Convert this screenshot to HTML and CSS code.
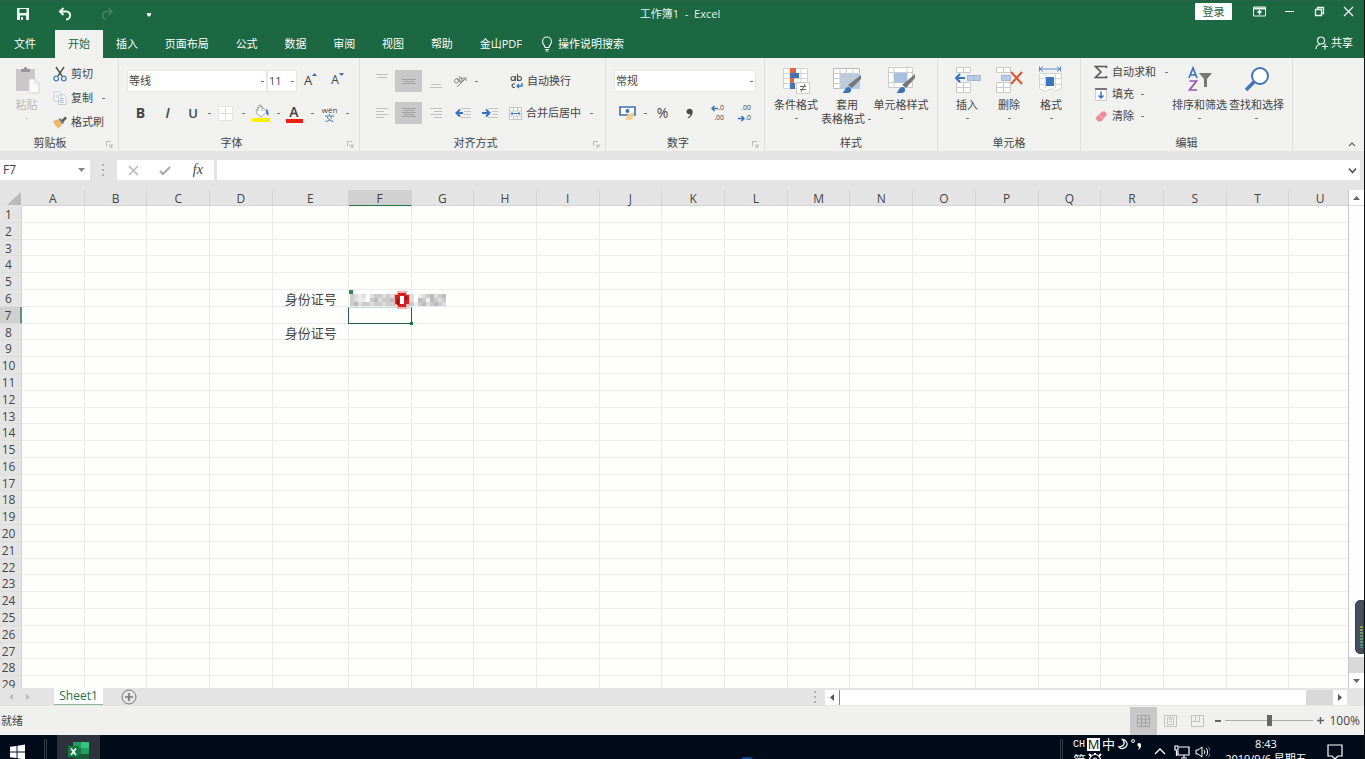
FILE: index.html
```html
<!DOCTYPE html>
<html lang="zh-CN">
<head>
<meta charset="utf-8">
<title>工作簿1 - Excel</title>
<link rel="stylesheet" href="styles.css">
</head>
<body>
<div class="app">
  <header class="titlebar">
    <div class="quick">
      <button class="q" aria-label="保存"><svg width="14" height="14" viewBox="0 0 14 14"><path d="M1 1h12v12H1z" fill="#e9f5ee"/><path d="M3.500 2h7v4h-7zM4 8.500h6V13H4z" fill="#1b6842"/><path d="M5 10h2v3H5z" fill="#e9f5ee"/></svg></button>
      <button class="q" aria-label="撤消"><svg width="14" height="14" viewBox="0 0 14 14" fill="none" stroke="#e9f5ee" stroke-width="2"><path d="M5.500 1 2 4.500 5.500 8M2 4.500h6c6 0 5 8 0 8"/></svg></button>
      <button class="q" aria-label="恢复"><svg width="14" height="14" viewBox="0 0 14 14" fill="none" stroke="#458762" stroke-width="1.500"><path d="M8.500 1 12 4.500 8.500 8M12 4.500H7c-6 0-5 7-1 8"/></svg></button>
      <button class="q" aria-label="自定义快速访问工具栏"><svg width="6" height="6" viewBox="0 0 6 6"><path d="M1 2h4v2L3 6 1 4z" fill="#e9f5ee"/></svg></button>
    </div>
    <h1 class="title">工作簿1&nbsp; -&nbsp; Excel</h1>
    <div class="winbtns">
      <button class="login">登录</button>
      <button class="w" aria-label="功能区显示选项"><svg width="13" height="11" viewBox="0 0 13 11" fill="none" stroke="#e9f5ee"><path d="M.5 1h12v9H.5z"/><path d="M1 2.500h11" stroke-width="2"/><path d="M6.500 9V4.500M4.500 6.500l2-2 2 2" stroke-width="1.400"/></svg></button>
      <button class="w" aria-label="最小化"><svg width="11" height="11" viewBox="0 0 11 11"><path d="M1 5h9v1H1z" fill="#fff"/></svg></button>
      <button class="w" aria-label="还原"><svg width="11" height="11" viewBox="0 0 11 11" fill="none" stroke="#e9f5ee"><path d="M1.500 3.500h6v6h-6zM3.500 3V1.500h6v6H8" stroke-width="1.300"/></svg></button>
      <button class="w" aria-label="关闭"><svg width="11" height="11" viewBox="0 0 11 11" stroke="#fff" stroke-width="1.100"><path d="M1 1l9 9M10 1l-9 9"/></svg></button>
    </div>
  </header>

  <nav class="tabs">
    <button class="tab file">文件</button>
    <button class="tab active">开始</button>
    <div class="tabset">
      <button class="tab">插入</button><button class="tab">页面布局</button><button class="tab">公式</button><button class="tab">数据</button><button class="tab">审阅</button><button class="tab">视图</button><button class="tab">帮助</button><button class="tab">金山PDF</button>
    </div>
    <button class="tell"><svg width="12" height="16" viewBox="0 0 12 16" fill="none" stroke="#e9f5ee" stroke-width="1.200"><path d="M4 11.500C4 9 1.500 8.500 1.500 5.500a4.500 4.500 0 0 1 9 0C10.500 8.500 8 9 8 11.500zM4 13.500h4M4.500 15h3"/></svg>操作说明搜索</button>
    <button class="share"><svg width="14" height="14" viewBox="0 0 14 14" fill="none" stroke="#e9f5ee" stroke-width="1.200"><circle cx="6" cy="4.500" r="3.500"/><path d="M1 13c0-3 2-4.500 4.500-4.500M10 7.500v6M7 10.500h6"/></svg>共享</button>
  </nav>

  <div class="ribbon">
    <section class="group g-clip">
      <div class="body">
        <button class="big paste"><svg width="28" height="28" viewBox="0 0 28 28"><path d="M3 3h19v22H3z" fill="#c9c7c7"/><path d="M8 6V3h2.500a2 2 0 0 1 4 0H17v3z" fill="#979595"/><path d="M16 13h6l4 4v10H16z" fill="#fbfafa" stroke="#d4d2d2"/><path d="M22 13v4h4" fill="none" stroke="#d4d2d2"/></svg><span>粘贴</span><i class="caret"></i></button>
        <div class="rows">
          <button class="line"><svg width="14" height="16" viewBox="0 0 14 16" fill="none"><path d="M3 1l6 9M11 1L5 10" stroke="#555" stroke-width="1.500"/><circle cx="3.200" cy="12.500" r="2.300" stroke="#4a7fc0" stroke-width="1.300"/><circle cx="10.800" cy="12.500" r="2.300" stroke="#4a7fc0" stroke-width="1.300"/></svg>剪切</button>
          <button class="line"><svg width="14" height="14" viewBox="0 0 14 14" fill="#fff" stroke="#b5c0cc" stroke-width=".8"><path d="M1 1h5l2 2v7H1zM5.500 4H11l2 2v7.500H5.500z"/><path d="M2.500 4h2M2.500 6h2M7 7.500h4M7 9.500h4M7 11.500h4" stroke="#8fb4dc"/></svg>复制<i class="caret wide"></i></button>
          <button class="line"><svg width="14" height="13" viewBox="0 0 15 13"><path d="M0 5l6-2 4 5-4 5C4 11 1 9 0 5z" fill="#efb568"/><path d="M6 3l2-1 4 5-2 1z" fill="#777"/><path d="M9 4l4-4 2 2-4 4z" fill="#555"/></svg>格式刷</button>
        </div>
      </div>
      <footer>剪贴板<svg class="launch" width="7" height="7" viewBox="0 0 7 7"><path d="M.5 5V.5H5M3 3l3 3M6 3v3H3" fill="none" stroke="#aaa" stroke-width=".8"/></svg></footer>
    </section>

    <section class="group g-font">
      <div class="body stack">
        <div class="bar">
          <select class="font-name" aria-label="字体"><option>等线</option></select><select class="font-size" aria-label="字号"><option>11</option></select>
          <button class="b grow" aria-label="增大字号">A<svg width="5" height="4" viewBox="0 0 5 4"><path d="M0 3l2.500-3L5 3z" fill="#3c6ca8"/></svg></button>
          <button class="b shrink" aria-label="减小字号">A<svg width="5" height="4" viewBox="0 0 5 4"><path d="M0 0h5L2.500 3z" fill="#3c6ca8"/></svg></button>
        </div>
        <div class="bar">
          <button class="b bold">B</button><button class="b italic">I</button><button class="b s underl">U</button><i class="caret"></i>
          <button class="b s" aria-label="边框"><svg width="15" height="15" viewBox="0 0 15 15"><path d="M.5.5h14v14H.5z" fill="#fff" stroke="#e4e4e4"/><path d="M7.500 1v13M1 7.500h13" stroke="#ddd"/></svg></button><i class="caret wide"></i>
          <button class="b" aria-label="填充颜色"><svg width="18" height="18" viewBox="0 0 18 18"><path d="M4 6l5-4 6 6-6 5-4-3z" fill="#fff" stroke="#aaa"/><path d="M6 7c-1-7 4-8 4-3v3" fill="none" stroke="#999"/><path d="M14 5c3 1 3 5 2 7l-2-3z" fill="#4a7fc0"/><path d="M0 14h18v4H0z" fill="#ffee00"/></svg></button><i class="caret"></i>
          <button class="b s fontcolor">A</button><i class="caret wide"></i>
          <button class="b wen" aria-label="拼音"><span>wén</span><svg width="9" height="8" viewBox="0 0 9 8" fill="none" stroke="#4a7fc0"><path d="M4 0l1 1.500M0 2h9M2 2.500C3 5 5 7 8.500 7.500M7 2.500C6 5 4 7 .5 7.500"/></svg></button><i class="caret"></i>
        </div>
      </div>
      <footer>字体<svg class="launch" width="7" height="7" viewBox="0 0 7 7"><path d="M.5 5V.5H5M3 3l3 3M6 3v3H3" fill="none" stroke="#aaa" stroke-width=".8"/></svg></footer>
    </section>

    <section class="group g-align">
      <div class="body stack">
        <div class="bar">
          <button class="b" aria-label="顶端对齐"><svg width="12" height="16" viewBox="0 0 12 16" stroke="#c0c0c0"><path d="M0 1.500h12M1 4.500h10"/></svg></button>
          <button class="b on" aria-label="垂直居中"><svg width="16" height="16" viewBox="0 0 16 16" stroke="#a2a2a2"><path d="M1 6.500h14M3 8.500h10M1 10.500h14"/></svg></button>
          <button class="b" aria-label="底端对齐"><svg width="12" height="16" viewBox="0 0 12 16" stroke="#c0c0c0"><path d="M1 11.500h10M0 14.500h12"/></svg></button>
          <button class="b orient" aria-label="方向"><svg width="15" height="14" viewBox="0 0 15 14" fill="none" stroke="#888"><circle cx="3.500" cy="7" r="2"/><path d="M4 4l4 5M6 2l4 5"/><circle cx="8" cy="5.500" r="1.800"/><path d="M4 13l9-9M10 4h3v3"/></svg></button><i class="caret"></i>
          <button class="line wrap"><svg width="13" height="15" viewBox="0 0 13 15" fill="none" stroke="#555" stroke-width="1.100"><circle cx="3" cy="4.500" r="2"/><path d="M5.500 2v5M7.500 0v7"/><circle cx="9.500" cy="4.500" r="2"/><path d="M5 10c-4-1-4 4 0 3.500"/><path d="M12 9v3H7M9 10l-2 2 2 2" stroke="#3c78c8" stroke-width="1.400"/></svg>自动换行</button>
        </div>
        <div class="bar">
          <button class="b" aria-label="左对齐"><svg width="12" height="12" viewBox="0 0 12 12" stroke="#c0c0c0"><path d="M0 1.500h12M0 4.500h8M0 7.500h12M0 10.500h8"/></svg></button>
          <button class="b on" aria-label="居中"><svg width="14" height="12" viewBox="0 0 14 12" stroke="#a2a2a2"><path d="M0 1.500h14M2 3.500h10M0 5.500h14M2 7.500h10M0 9.500h14"/></svg></button>
          <button class="b" aria-label="右对齐"><svg width="12" height="12" viewBox="0 0 12 12" stroke="#c0c0c0"><path d="M0 1.500h12M4 4.500h8M0 7.500h12M4 10.500h8"/></svg></button>
          <button class="b" aria-label="减少缩进"><svg width="16" height="12" viewBox="0 0 16 12"><path d="M6 1.500h10M9 4.500h7M9 7.500h7M6 10.500h10" stroke="#c4c4c4"/><path d="M8 6H2M5 2.500L1.500 6 5 9.500" fill="none" stroke="#3873bd" stroke-width="2"/></svg></button>
          <button class="b" aria-label="增加缩进"><svg width="16" height="12" viewBox="0 0 16 12"><path d="M6 1.500h10M10 4.500h6M10 7.500h6M6 10.500h10" stroke="#c4c4c4"/><path d="M0 6h7M4 2.500L7.500 6 4 9.500" fill="none" stroke="#3873bd" stroke-width="2"/></svg></button>
          <button class="line merge"><svg width="13" height="13" viewBox="0 0 13 13"><path d="M.5.500h12v12H.5zM4.500.5V4M8.500.5V4M.5 4h12M.5 9h12M4.500 9v4M8.500 9v4" fill="#fff" stroke="#c6c6c6"/><path d="M2 6.500h9M3.500 5L2 6.500 3.500 8M9.500 5L11 6.500 9.500 8" fill="none" stroke="#3c78c8"/></svg>合并后居中<i class="caret wide"></i></button>
        </div>
      </div>
      <footer>对齐方式<svg class="launch" width="7" height="7" viewBox="0 0 7 7"><path d="M.5 5V.5H5M3 3l3 3M6 3v3H3" fill="none" stroke="#aaa" stroke-width=".8"/></svg></footer>
    </section>

    <section class="group g-num">
      <div class="body stack">
        <div class="bar"><select class="num-format" aria-label="数字格式"><option>常规</option></select></div>
        <div class="bar">
          <button class="b" aria-label="会计数字格式"><svg width="17" height="16" viewBox="0 0 17 16"><path d="M1 2h15v8H1z" fill="#fff" stroke="#3c70b0" stroke-width="1.600"/><circle cx="8.500" cy="6" r="2" fill="#3c70b0"/><path d="M8 10l7-3v4l-3 4H7z" fill="#f1cf8d"/></svg></button><i class="caret"></i>
          <button class="b pct">%</button>
          <button class="b" aria-label="千位分隔样式"><svg width="7" height="11" viewBox="0 0 8 11"><path d="M4 0c3 0 4 2 3.500 5C7 8 5 10 2.500 11L2 10c2-1 3-2 3-4C2 7 .5 5 .5 3.500.5 1.500 2 0 4 0z" fill="#4a4a4a"/></svg></button>
          <button class="b dec" aria-label="增加小数位数"><span><svg width="7" height="7" viewBox="0 0 7 7"><path d="M7 3.500H1M3.500 1L1 3.500 3.500 6" fill="none" stroke="#3873bd" stroke-width="1.500"/></svg>.0</span><span>.00</span></button>
          <button class="b dec" aria-label="减少小数位数"><span>.00</span><span><svg width="7" height="7" viewBox="0 0 7 7"><path d="M0 3.500h6M3.500 1L6 3.500 3.500 6" fill="none" stroke="#3873bd" stroke-width="1.500"/></svg>.0</span></button>
        </div>
      </div>
      <footer>数字<svg class="launch" width="7" height="7" viewBox="0 0 7 7"><path d="M.5 5V.5H5M3 3l3 3M6 3v3H3" fill="none" stroke="#aaa" stroke-width=".8"/></svg></footer>
    </section>

    <section class="group g-style">
      <div class="body">
        <button class="big"><svg width="28" height="28" viewBox="0 0 28 28"><path d="M1.500 2.500h24v20h-24zM1.500 7.500h24M1.500 12.500h24M1.500 17.500h24M8 2.500v20M19 2.500v20" fill="#fff" stroke="#d2d2d2"/><path d="M8 2h6v5H8zM8 12h4v5H8z" fill="#e0653d"/><path d="M8 7h9v5H8zM8 17h5v6H8z" fill="#4372b5"/><path d="M14.500 16.500h13v11h-13z" fill="#fff" stroke="#ccc"/><path d="M18 20.500h6M18 23.500h6M23 18l-4 8" stroke="#666"/></svg><span>条件格式</span><i class="caret"></i></button>
        <button class="big"><svg width="28" height="28" viewBox="0 0 28 28"><path d="M.5 2.500h26v20H.5z" fill="#fff" stroke="#bbb"/><path d="M7 7h20v16H7z" fill="#b6cbe6"/><path d="M.5 7.500h26M.5 12.500h26M.5 17.500h26M7 2.500v20M13.500 2.500v20M20 2.500v20" stroke="#ccc"/><path d="M28 9v4l-9 9-4-3z" fill="#777"/><path d="M9 27c3-1 2-6 7-6 3 1 3 6-1 6z" fill="#3d74b8"/></svg><span>套用</span><span>表格格式<i class="caret"></i></span></button>
        <button class="big"><svg width="28" height="28" viewBox="0 0 28 28"><path d="M1.500 1.500h24v20h-24zM1.500 6.500h24M1.500 16.500h24M7 1.500v20M20 1.500v20" fill="#fff" stroke="#ccc"/><path d="M7 7h13v10H7z" fill="#a9c1e1"/><path d="M28 8v4l-9 10-4-3z" fill="#777"/><path d="M9 27c3-1 2-6 7-6 3 1 3 6-1 6z" fill="#3d74b8"/></svg><span>单元格样式</span><i class="caret"></i></button>
      </div>
      <footer>样式</footer>
    </section>

    <section class="group g-cells">
      <div class="body">
        <button class="big"><svg width="28" height="28" viewBox="0 0 28 28"><path d="M3.500 1.500h14v5h-14zM10.500 1.500v5M3.500 16.500h14v10h-14zM3.500 21.500h14M10.500 16.500v10" fill="#fff" stroke="#cacaca"/><path d="M14.500 9.500h13v5h-13zM21 9.500v5" fill="#b6cbe6" stroke="#a5b5c8"/><path d="M12 12H3M7 8l-4 4 4 4" fill="none" stroke="#3873bd" stroke-width="2"/></svg><span>插入</span><i class="caret"></i></button>
        <button class="big"><svg width="28" height="28" viewBox="0 0 28 28"><path d="M1.500 1.500h14v5h-14zM8.500 1.500v5M1.500 16.500h14v10h-14zM1.500 21.500h14M8.500 16.500v10" fill="#fff" stroke="#cacaca"/><path d="M6.500 9.500h9v5h-9z" fill="#b6cbe6" stroke="#a5b5c8"/><path d="M16 6l11 12M27 6L16 18" stroke="#dc5b37" stroke-width="2.200"/></svg><span>删除</span><i class="caret"></i></button>
        <button class="big"><svg width="28" height="28" viewBox="0 0 28 28"><path d="M3 3h20M6 .5L3 3l3 2.500M20 .5L23 3l-3 2.500M2.500.5v5M23.500.5v5" fill="none" stroke="#5a8ac6"/><path d="M2.500 7.500h22v15l-6 3-4-3-6 3-6-3zM2.500 12.500h22M2.500 18.500h22M8.500 7.500v15M18.500 7.500v15" fill="#fff" stroke="#d4d4d4"/><path d="M9 11h8v9H9z" fill="#3b76bf"/></svg><span>格式</span><i class="caret"></i></button>
      </div>
      <footer>单元格</footer>
    </section>

    <section class="group g-edit">
      <div class="body">
        <div class="rows">
          <button class="line"><svg width="14" height="14" viewBox="0 0 14 14"><path d="M12.500 3V1.500h-11L7 7l-5.500 5.500h11V11" fill="none" stroke="#555" stroke-width="1.600"/></svg>自动求和<i class="caret wide"></i></button>
          <button class="line"><svg width="14" height="13" viewBox="0 0 14 13"><path d="M1.500 1.500h11v11h-11z" fill="#fff" stroke="#ccc"/><path d="M1 1h12" stroke="#777" stroke-width="2"/><path d="M7 3.500V10M4.500 7.500L7 10l2.500-2.500" fill="none" stroke="#3873bd" stroke-width="1.500"/></svg>填充<i class="caret"></i></button>
          <button class="line"><svg width="14" height="13" viewBox="0 0 14 13"><path d="M8 1.500h3l2 3-6 7H4L1.500 8z" fill="#ea8b9b"/><path d="M5 4.500l4 4" stroke="#f6c3ca"/></svg>清除<i class="caret"></i></button>
        </div>
        <button class="big"><svg width="28" height="28" viewBox="0 0 28 28" fill="none"><path d="M3 12L7 2l4 10M4.500 9h5" stroke="#3c75bd" stroke-width="1.700"/><path d="M3.500 15h7L3.500 24h7.500" stroke="#9455b5" stroke-width="1.700"/><path d="M13 7h13l-5 6v8h-3v-8z" fill="#777"/></svg><span>排序和筛选</span><i class="caret"></i></button>
        <button class="big"><svg width="28" height="28" viewBox="0 0 28 28" fill="none" stroke="#3f77b6"><circle cx="17" cy="10" r="8" fill="#fff" stroke-width="2"/><path d="M11 16l-8 8" stroke-width="3.500"/></svg><span>查找和选择</span><i class="caret"></i></button>
      </div>
      <footer>编辑</footer>
    </section>
    <button class="collapse" aria-label="折叠功能区"><svg width="8" height="6" viewBox="0 0 8 6"><path d="M1 5l3-3 3 3" fill="none" stroke="#666" stroke-width="1.200"/></svg></button>
  </div>

  <div class="formula">
    <label class="namebox"><input aria-label="名称框" value="F7"><svg width="7" height="4" viewBox="0 0 7 4"><path d="M0 0h7L3.500 4z" fill="#888"/></svg></label>
    <span class="grip"></span>
    <div class="fxbtns">
      <button aria-label="取消"><svg width="11" height="11" viewBox="0 0 11 11" stroke="#b8b8b8" stroke-width="1.500"><path d="M1 1l9 9M10 1l-9 9"/></svg></button>
      <button aria-label="输入"><svg width="12" height="11" viewBox="0 0 12 11" fill="none" stroke="#a9a9a9" stroke-width="2"><path d="M1 6l3 3 7-7"/></svg></button>
      <button class="fx">fx</button>
    </div>
    <div class="fxinput"><input aria-label="编辑栏"><svg width="9" height="7" viewBox="0 0 9 7"><path d="M1 1.500l3.500 4 3.500-4" fill="none" stroke="#555" stroke-width="1.700"/></svg></div>
  </div>

  <main class="work">
    <div class="sheet"><table class="cells" id="cells"></table></div>
    <div class="vscroll">
      <button aria-label="向上滚动"><svg width="7" height="4" viewBox="0 0 7 4"><path d="M0 4h7L3.500 0z" fill="#666"/></svg></button>
      <div class="vthumb"></div><div class="vtrack"></div>
      <button aria-label="向下滚动"><svg width="7" height="4" viewBox="0 0 7 4"><path d="M0 0h7L3.500 4z" fill="#666"/></svg></button>
    </div>
    <div class="meter"><i></i></div>
  </main>

  <div class="sheetbar">
    <div class="sheetnav"><svg width="4" height="6" viewBox="0 0 4 6"><path d="M4 0v6L0 3z" fill="#bbb"/></svg><svg width="4" height="6" viewBox="0 0 4 6"><path d="M0 0v6l4-3z" fill="#bbb"/></svg></div>
    <button class="sheettab">Sheet1</button>
    <button class="addsheet" aria-label="新工作表"><svg width="16" height="16" viewBox="0 0 16 16" fill="none" stroke="#777"><circle cx="8" cy="8" r="7"/><path d="M8 4v8M4 8h8" stroke-width="1.600"/></svg></button>
    <span class="grip"></span>
    <div class="hscroll">
      <button aria-label="向左滚动"><svg width="4" height="7" viewBox="0 0 4 7"><path d="M4 0v7L0 3.500z" fill="#555"/></svg></button>
      <div class="hthumb"></div><div class="htrack"></div>
      <button aria-label="向右滚动"><svg width="4" height="7" viewBox="0 0 4 7"><path d="M0 0v7l4-3.500z" fill="#555"/></svg></button>
    </div>
  </div>

  <div class="status">
    <span class="ready">就绪</span>
    <button class="view on" aria-label="普通"><svg width="13" height="12" viewBox="0 0 13 12" fill="none" stroke="#a2a2a2"><path d="M.5.500h12v11H.5zM.5 4h12M.5 8h12M4.500.5v11M8.500.5v11"/></svg></button>
    <button class="view" aria-label="页面布局"><svg width="13" height="12" viewBox="0 0 13 12" fill="none" stroke="#c2c2c2"><path d="M.5.500h12v11H.5zM3.500 2.500h6v7h-6zM5 4.500h3M5 6.500h3"/></svg></button>
    <button class="view" aria-label="分页预览"><svg width="13" height="12" viewBox="0 0 13 12" fill="none" stroke="#c2c2c2"><path d="M.5.500h12v11H.5zM4.500.5v6h4v-6M.5 6.500h4"/></svg></button>
    <button class="z" aria-label="缩小"><svg width="7" height="7" viewBox="0 0 7 7"><path d="M0 3h6v2H0z" fill="#666"/></svg></button>
    <input class="zoom" type="range" min="10" max="190" value="100" aria-label="缩放">
    <button class="z" aria-label="放大"><svg width="7" height="7" viewBox="0 0 7 7"><path d="M0 3.500h7M3.500 0v7" stroke="#666" stroke-width="1.500"/></svg></button>
    <span class="pct100">100%</span>
  </div>

  <footer class="taskbar">
    <button class="start" aria-label="开始菜单"><svg width="15" height="16" viewBox="0 0 16 16" fill="#fff"><path d="M0 2.500l7-1V7.500H0zM8 1.300L16 0v7.500H8zM0 8.500h7v6l-7-1zM8 8.500h8V16l-8-1.300z"/></svg></button>
    <span class="sep"></span>
    <button class="xl" aria-label="Excel"><svg width="22" height="20" viewBox="0 0 22 20"><path d="M5 1h16v18H5z" fill="#1f9e60"/><path d="M13 1h8v6h-8z" fill="#37c481"/><path d="M5 7h8v6H5z" fill="#107c41"/><path d="M5 13h16v6H5z" fill="#185c37"/><path d="M0 5h11v11H0z" fill="#137a42"/><path d="M3 7.500l5 6.500M8 7.500L3 14" stroke="#fff" stroke-width="1.700"/></svg></button>
    <span class="glow"></span>
    <div class="tray">
      <span class="sep"></span>
      <div class="ime">
        <div><span class="ch">CH</span><b>M</b><span>中</span><svg width="11" height="13" viewBox="0 0 12 13"><path d="M6 1c4 4 1 8-4 8 3 4 9 1 9-3 0-2-2-5-5-5z" fill="none" stroke="#fff" stroke-width="1.300"/></svg><svg width="12" height="13" viewBox="0 0 12 13"><circle cx="3" cy="3" r="1.500" fill="none" stroke="#fff"/><path d="M9 5c3 0 3 5-1 7 1-2 1-2 1-3-2-1-2-4 0-4z" fill="#fff"/></svg></div>
        <div><span>简</span><svg width="14" height="14" viewBox="0 0 14 14" fill="none" stroke="#fff"><circle cx="7" cy="7" r="2"/><circle cx="7" cy="7" r="5.500" stroke-width="1.200"/><path d="M3 3L1 1M7 2V0M11 3l2-2" stroke-width="2"/></svg></div>
      </div>
      <svg class="ti up" width="12" height="8" viewBox="0 0 12 8"><path d="M1 7l5-5 5 5" fill="none" stroke="#fff" stroke-width="1.300"/></svg>
      <svg class="ti" width="16" height="14" viewBox="0 0 16 14" fill="none" stroke="#fff" stroke-width="1.200"><path d="M5 2h10v8H4V6M7 13h6M10 10v3M1 1h3v4H1zM2.500 5v6"/></svg>
      <svg class="ti" width="15" height="14" viewBox="0 0 15 14" fill="none" stroke="#fff"><path d="M1 5h2l4-3v10L3 9H1zM9 5c1 1 1 3 0 4M11 3c2 2 2 6 0 8"/><path d="M13 1.500c3 3 3 8 0 11" stroke="#888"/></svg>
      <div class="clock"><span>8:43</span><span>2019/9/6 星期五</span></div>
      <svg class="ti note" width="16" height="16" viewBox="0 0 16 16"><path d="M1 1h14v11h-4l-3 3-3-3H1z" fill="none" stroke="#fff" stroke-width="1.200"/></svg>
    </div>
  </footer>
</div>
<script src="script.js"></script>
</body>
</html>
```

FILE: styles.css
```css
* { box-sizing: border-box; }
body {
  margin: 0;
  font: 11px/14px "Open Sans", "Noto Sans CJK SC", sans-serif;
  color: #444;
}
button, input, select {
  font: inherit;
  color: inherit;
  border: 0;
  background: none;
  padding: 0;
  margin: 0;
  border-radius: 0;
  white-space: nowrap;
}
button { display: flex; align-items: center; justify-content: center; }
svg { flex: none; display: block; }
.app {
  height: 100vh;
  display: flex;
  flex-direction: column;
  overflow: hidden;
  border-right: 1px solid #111;
  background: #e4e4e4;
}

/* Title bar and tabs */
.titlebar {
  flex: none;
  height: 30px;
  display: grid;
  grid-template-columns: 1fr auto 1fr;
  background: #1b6842;
  border-top: 1px solid #2b6249;
  color: #e9f5ee;
}
.quick { display: flex; align-items: center; padding: 0 0 4px 2px; }
.q { width: 42px; height: 24px; }
.title { margin: 0; padding-right: 4px; font-size: 11px; font-weight: 400; line-height: 26px; }
.winbtns { display: flex; justify-content: flex-end; align-items: flex-start; }
.login {
  width: 37px;
  height: 17px;
  margin: 2px 12px 0 0;
  background: #fff;
  color: #1b6842;
  border-radius: 1px;
}
.w { width: 30px; height: 20px; }
.w:last-child { padding-right: 2px; }
.tabs {
  flex: none;
  height: 28px;
  display: flex;
  background: #1b6842;
  color: #fff;
}
.tab { padding: 0 13px; }
.file { padding: 0 19px 0 14px; }
.active { background: #f1f1ef; color: #1b6842; }
.tabset { flex: 0 0 432px; display: flex; justify-content: space-between; }
.tell { gap: 5px; padding-left: 6px; }
.share { gap: 2px; margin-left: auto; padding: 0 11px 3px 0; }

/* Ribbon */
.ribbon {
  flex: none;
  height: 93px;
  display: flex;
  background: #f1f1ef;
}
.group {
  flex: none;
  display: flex;
  flex-direction: column;
  border-right: 1px solid #dedede;
}
.group footer {
  position: relative;
  height: 15px;
  padding-right: 18px;
  text-align: center;
  line-height: 14px;
}
.launch { position: absolute; right: 5px; bottom: 3px; }
.body { flex: 1; display: flex; align-items: flex-start; }
.stack { flex-direction: column; gap: 10px; padding: 12px 0 0 8px; }
.bar { display: flex; height: 22px; }
.g-clip { width: 119px; }
.g-font { width: 241px; }
.g-align { width: 246px; }
.g-num { width: 159px; }
.g-style { width: 173px; }
.g-cells { width: 143px; }
.g-edit { width: 212px; }
.g-font footer { padding-right: 15px; }
.g-align footer, .g-num footer { padding-right: 14px; }
.g-style footer, .g-cells footer, .g-edit footer { padding-right: 0; }
.g-style .body { padding-left: 4px; }
.g-cells .body { padding-left: 8px; }
.g-edit .body { padding-left: 13px; }
.big {
  flex-direction: column;
  justify-content: flex-start;
  padding-top: 8px;
}
.big span { display: flex; margin-top: 4px; }
.big span + span { margin-top: 0; }
.big > .caret { height: 12px; }
.g-style .big:nth-child(1) { width: 54px; }
.g-style .big:nth-child(2) { width: 48px; }
.g-style .big:nth-child(3) { width: 60px; }
.g-cells .big { width: 42px; }
.g-edit .big { width: 57px; }
.paste { width: 53px; color: #b8b8b8; }
.rows { padding-top: 4px; }
.line { height: 24px; gap: 4px; }
.rows .line { justify-content: flex-start; }
.g-edit .rows { width: 77px; padding-top: 3px; }
.g-edit .line { height: 22px; }
.caret {
  width: 8px;
  height: 22px;
  display: flex;
  align-items: center;
  justify-content: center;
  align-self: center;
}
.caret::after { content: ""; width: 3px; height: 1px; background: #777; }
.big span .caret { height: 14px; }
.g-clip .big .caret::after { background: #ccc; }
.wide { margin-left: 2px; }
.b { width: 27px; height: 22px; }
.s { width: 24px; }
.on { background: #c8c8c8; }
.bar select {
  height: 22px;
  background: #fff;
  border: 1px solid #e6e6e6;
  padding: 0 1px;
  appearance: none;
  background-image: linear-gradient(#777, #777);
  background-size: 3px 1px;
  background-repeat: no-repeat;
  background-position: right 2px center;
}
.font-name { width: 140px; }
.font-size { width: 30px; }
.num-format { width: 142px; }
.grow, .shrink { align-items: flex-start; padding-top: 3px; font-size: 13px; }
.shrink { font-size: 12px; }
.bold { font-weight: 700; font-size: 14px; }
.italic { font-style: italic; font-weight: 600; font-size: 14px; }
.underl { font-weight: 600; font-size: 13px; }
.fontcolor { flex-direction: column; font-size: 14px; font-weight: 600; line-height: 14px; padding-top: 2px; }
.fontcolor::after { content: ""; width: 17px; height: 4px; background: #ee1c0c; }
.wen { flex-direction: column; font-size: 8px; line-height: 9px; }
.orient { width: 23px; }
.wrap { height: 22px; padding-left: 30px; }
.merge { height: 22px; padding-left: 6px; }
.pct { font-size: 14px; }
.dec { flex-direction: column; align-items: flex-end; padding-right: 6px; font-size: 7px; line-height: 10px; }
.dec span { display: flex; align-items: center; }
.collapse { margin: auto 8px 4px auto; }

/* Formula bar */
.formula { flex: none; height: 39px; display: flex; padding: 9px 4px 10px 0; }
.namebox { width: 90px; display: flex; align-items: center; background: #fff; padding: 0 5px 0 3px; font-size: 12px; }
.namebox input { flex: 1; min-width: 0; }
.grip {
  width: 2px;
  height: 12px;
  align-self: center;
  background: repeating-linear-gradient(#b0b0b0 0 2px, transparent 2px 5px);
}
.formula .grip { margin: 0 13px 0 12px; }
.fxbtns { width: 97px; display: flex; background: #fff; }
.fxbtns button { flex: 1; }
.fx { font: italic 14px "Liberation Serif", serif; }
.fxinput { flex: 1; display: flex; align-items: center; margin-left: 3px; background: #fff; padding-right: 3px; }
.fxinput input { flex: 1; }
input { outline: none; }

/* Worksheet */
.work { flex: 1; min-height: 0; display: flex; position: relative; }
.sheet { flex: 1; overflow: hidden; background: #fefefd; }
.cells {
  display: grid;
  width: calc(100% + 4px);
  height: calc(100% + 5px);
  grid-template-columns: 22px repeat(4, minmax(0, 1fr)) 76px repeat(16, minmax(0, 1fr));
  grid-template-rows: 16px repeat(29, minmax(0, 1fr));
}
.cells thead, .cells tbody, .cells tr { display: contents; }
.cells th, .cells td {
  padding: 0;
  min-width: 0;
  border: 0 solid #ececec;
  border-width: 0 1px 1px 0;
  white-space: nowrap;
}
.cells th { font-weight: 400; font-size: 12px; line-height: 18px; background: #e4e4e4; border-color: #d4d4d4; }
.cells tbody th { padding-right: 4px; border-bottom-color: #dedede; }
.cells .corner { border-color: #e4e4e4; display: flex; justify-content: flex-end; align-items: flex-end; }
.cells .sel { background: #d0d0d0; }
.cells thead .sel { border-bottom: 1px solid #217346; }
.cells tbody .sel { border-right: 2px solid #5f9377; }
.cells .text { font-size: 13px; line-height: 18px; text-align: right; padding-right: 11px; }
.cells .mosaic { position: relative; }
.mosaic svg { position: absolute; left: 0; top: 0; z-index: 2; }
.cells .current { position: relative; }
.current::before { content: ""; position: absolute; inset: 0 -1px -1px -1px; border: 1px solid #275f47; border-top-color: #c4dece; }
.current::after { content: ""; position: absolute; right: -2px; bottom: -2px; width: 3px; height: 3px; background: #217346; }
.vscroll { width: 16px; display: flex; flex-direction: column; border-left: 1px solid #c8c8c8; background: #fefefe; }
.vscroll button { height: 15px; }
.vthumb { flex: 1; border-top: 1px solid #ddd; }
.vtrack { height: 16px; background: #d9d9d9; }
.meter {
  position: absolute;
  right: 0;
  bottom: 34px;
  width: 9px;
  height: 54px;
  border-radius: 5px 0 0 5px;
  background: #474d5c;
  border: 1px solid #3b4150;
}
.meter i {
  display: block;
  margin: 25px 0 0 4px;
  height: 22px;
  background: repeating-linear-gradient(transparent 0 2px, #474d5c 2px 3px), linear-gradient(#8ea04d, #439088);
}

/* Sheet tabs */
.sheetbar { flex: none; height: 18px; display: flex; }
.sheetnav { width: 54px; display: flex; align-items: center; gap: 13px; padding-left: 9px; }
.sheettab { width: 49px; height: 17px; background: #fff; color: #217346; font-size: 12px; border-bottom: 1px solid #8fb5a0; }
.addsheet { margin-left: 18px; }
.sheetbar > .grip { margin: 0 9px 0 auto; }
.hscroll { flex: 0 0 539px; display: flex; padding: 2px 17px 1px 0; }
.hscroll button { width: 14px; background: #fff; }
.hthumb { flex: 1; background: #fff; border-left: 1px solid #888; }
.htrack { width: 27px; background: #d9d9d9; }

/* Status bar */
.status { flex: none; height: 29px; display: flex; align-items: center; background: #f0f0ee; padding-right: 4px; }
.ready { margin-right: auto; padding-left: 1px; }
.view { width: 27px; height: 28px; }
.z { width: 14px; height: 20px; }
.zoom { width: 88px; height: 20px; appearance: none; }
.zoom::-webkit-slider-runnable-track { height: 1px; background: #aaa; }
.zoom::-webkit-slider-thumb { appearance: none; width: 5px; height: 11px; margin-top: -5px; background: #666; }
.pct100 { width: 33px; text-align: right; font-size: 12px; }

/* Taskbar */
.taskbar { flex: none; height: 24px; display: flex; overflow: hidden; background: #020b1a; color: #fff; position: relative; }
.start { width: 34px; height: 34px; }
.sep { width: 3px; height: 20px; margin: 4px 0 0 10px; border: 1px solid #333b47; border-width: 0 1px; }
.xl { width: 43px; height: 32px; margin-left: 10px; background: #2c323e; }
.glow { width: 12px; height: 3px; margin: 22px auto 0 47%; border-radius: 6px 6px 0 0; background: #0c4585; }
.tray { flex: none; display: flex; align-items: flex-start; width: 304px; }
.tray .sep { margin-left: 0; }
.ime { margin-left: 10px; width: 81px; font-size: 13px; line-height: 15px; }
.ime div { display: flex; align-items: center; gap: 2px; height: 14px; margin-top: 2px; }
.ime b { width: 13px; height: 13px; background: #fff; color: #111; text-align: center; line-height: 13px; font-weight: 400; }
.ch { font-family: "Liberation Mono", monospace; font-size: 10px; }
.ti { margin: 10px 5px 0 0; }
.up { margin: 12px 8px 0 0; }
.clock { width: 102px; display: flex; flex-direction: column; align-items: center; padding-top: 2px; white-space: nowrap; }
.clock span + span { padding-top: 1px; }
.note { margin: 9px 0 0 10px; }
```

FILE: script.js
```js
const table = document.getElementById('cells');
const columns = 'ABCDEFGHIJKLMNOPQRSTU'.split('');
const texts = { E6: '身份证号', E8: '身份证号' };

// Pixelated value: one hex digit of lightness per 4px block, three rows high.
function mosaic() {
  const rows = [
    'cdedfdccdcdcbdcdfedcbdcb',
    'cdeefcbdccbdcccdfbcebcdc',
    'cbdccdccdccbcddcecbdcbcd'
  ];
  let rects = '';
  rows.forEach((row, y) => {
    row.split('').forEach((v, x) => {
      rects += `<rect x="${1 + x * 4}" y="${4 + y * 4}" width="4" height="4" fill="#${v}${v}${v}"/>`;
    });
  });
  return `<svg width="100" height="20" viewBox="0 0 100 20">${rects}
    <path d="M0 0h4v4H0z" fill="#2f8a4a"/>
    <path d="M48 1h10v3h3v12h-3v3H48v-3h-3V4h3z" fill="#f0b4b0"/>
    <path d="M49 3h8v2h3v9h-3v3h-8v-3h-3V5h3z" fill="#d42020"/>
    <path d="M48 9h2v6h-2zM56 6h2v4h-2z" fill="#8f1515"/>
    <path d="M51 6h4v8h-4z" fill="#fff"/></svg>`;
}

let html = '<thead><tr><th class="corner"><svg width="14" height="13" viewBox="0 0 14 13"><path d="M14 0v13H0z" fill="#b9b9b9"/></svg></th>';
columns.forEach(c => { html += `<th class="${c === 'F' ? 'sel' : ''}">${c}</th>`; });
html += '</tr></thead><tbody>';
for (let r = 1; r <= 29; r++) {
  html += `<tr><th class="${r === 7 ? 'sel' : ''}">${r}</th>`;
  columns.forEach(c => {
    const id = c + r;
    if (texts[id]) html += `<td class="text">${texts[id]}</td>`;
    else if (id === 'F6') html += `<td class="mosaic">${mosaic()}</td>`;
    else if (id === 'F7') html += '<td class="current"></td>';
    else html += '<td></td>';
  });
  html += '</tr>';
}
table.innerHTML = html + '</tbody>';
```
